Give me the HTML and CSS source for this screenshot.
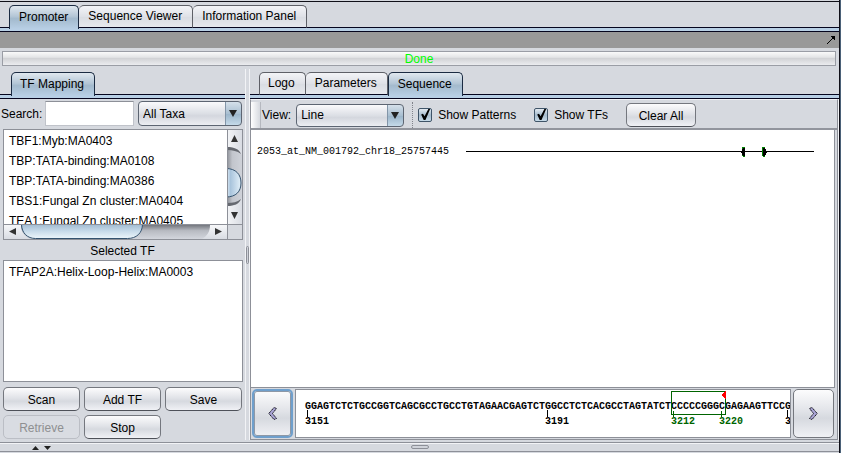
FILE: index.html
```html
<!DOCTYPE html>
<html lang="en">
<head>
<meta charset="utf-8">
<title>Promoter</title>
<link rel="stylesheet" href="styles.css">
</head>
<body>
<div class="app">
  <div class="tabs tabs-main" role="tablist">
    <button class="tab active" role="tab" aria-selected="true">Promoter</button>
    <button class="tab" role="tab">Sequence Viewer</button>
    <button class="tab" role="tab">Information Panel</button>
  </div>
  <div class="titlebar">
    <button class="detach" aria-label="Detach">
      <svg width="8" height="8" viewBox="0 0 8 8" shape-rendering="crispEdges"><path d="M4 0h4v4h-1v-1h-1v-1h-1v-1h-1z"/><path d="M0 7h1v-1h1v-1h1v-1h1v-1h1v-1h1v1h-1v1h-1v1h-1v1h-1v1h-1v1h-1z"/></svg>
    </button>
  </div>
  <div class="progress" role="progressbar" aria-label="Progress">Done</div>

  <div class="split">
    <section class="left">
      <div class="tabs tabs-sub" role="tablist">
        <button class="tab active" role="tab" aria-selected="true">TF Mapping</button>
      </div>
      <div class="search">
        <label for="q">Search:</label>
        <input id="q" class="field" type="text">
        <span class="combo">
          <select aria-label="Taxa"><option>All Taxa</option></select>
        </span>
      </div>
      <div class="scroller">
        <ul class="list">
          <li>TBF1:Myb:MA0403</li>
          <li>TBP:TATA-binding:MA0108</li>
          <li>TBP:TATA-binding:MA0386</li>
          <li>TBS1:Fungal Zn cluster:MA0404</li>
          <li>TEA1:Fungal Zn cluster:MA0405</li>
        </ul>
        <svg class="vbar" width="15" height="94" viewBox="0 0 15 94">
          <defs>
            <linearGradient id="tv"><stop offset="0" stop-color="#8d9097"/><stop offset=".35" stop-color="#c2c5cc"/><stop offset="1" stop-color="#cfd2d9"/></linearGradient>
            <linearGradient id="bv"><stop offset="0" stop-color="#e9f3fa"/><stop offset=".3" stop-color="#a9c4dc"/><stop offset="1" stop-color="#e3f0f9"/></linearGradient>
            <linearGradient id="btv"><stop offset="0" stop-color="#f4f5f7"/><stop offset="1" stop-color="#d9dce3"/></linearGradient>
          </defs>
          <path d="M0 0h15v94h-15z" fill="url(#btv)"/>
          <path d="M0 17c9 0 12 3 15 8v43c-3 6-6 8-15 8z" fill="url(#tv)"/>
          <path d="M0 17c7 0 12 2 14 7c-4-3-8-4-14-4zM0 76c7 0 12-2 14-7c-4 3-8 4-14 4z" fill="#666970"/>
          <path d="M-1 38.500c10 0 15 6 15 14.500s-5 14-15 14z" fill="url(#bv)" stroke="#35536f"/>
          <path d="M4 12l3.500-7l3.500 7zM4 82l3.500 7l3.500-7z" fill="#333"/>
          <path d="M.5 0v94" stroke="#8d9098"/>
        </svg>
        <svg class="hbar" width="223" height="14" viewBox="0 0 223 14">
          <defs>
            <linearGradient id="th" x2="0" y2="1"><stop offset="0" stop-color="#74777e"/><stop offset=".4" stop-color="#b7bac1"/><stop offset="1" stop-color="#d3d6dd"/></linearGradient>
            <linearGradient id="bh" x2="0" y2="1"><stop offset="0" stop-color="#9fbad1"/><stop offset=".5" stop-color="#c8dbea"/><stop offset="1" stop-color="#edf6fb"/></linearGradient>
            <linearGradient id="bth" x2="0" y2="1"><stop offset="0" stop-color="#f6f7f9"/><stop offset="1" stop-color="#d9dce3"/></linearGradient>
          </defs>
          <path d="M0 0h223v14h-223z" fill="url(#bth)"/>
          <path d="M17 0h189c0 7-3 11-8 14h-172c-6-3-9-7-9-14z" fill="url(#th)"/>
          <path d="M17.500-1c0 9 6 14.500 14 14.500h92c9 0 15-5.500 15-14.500z" fill="url(#bh)" stroke="#35536f"/>
          <path d="M12 3l-7 3.500l7 3.500zM211 3l7 3.500l-7 3.500z" fill="#333"/>
        </svg>
        <span class="corner"></span>
      </div>
      <h2 class="caption">Selected TF</h2>
      <ul class="list selected">
        <li>TFAP2A:Helix-Loop-Helix:MA0003</li>
      </ul>
      <div class="actions">
        <button class="btn">Scan</button>
        <button class="btn">Add TF</button>
        <button class="btn">Save</button>
        <button class="btn" disabled>Retrieve</button>
        <button class="btn">Stop</button>
      </div>
    </section>

    <div class="divider"><span class="grip"></span></div>

    <section class="right">
      <div class="tabs tabs-sub" role="tablist">
        <button class="tab" role="tab">Logo</button>
        <button class="tab" role="tab">Parameters</button>
        <button class="tab active" role="tab" aria-selected="true">Sequence</button>
      </div>
      <div class="panel">
        <div class="toolbar">
          <span class="handle"></span>
          <label for="view">View:</label>
          <span class="combo view">
            <select id="view"><option>Line</option></select>
          </span>
          <span class="dots"></span>
          <label class="check"><input type="checkbox" checked>Show Patterns</label>
          <label class="check"><input type="checkbox" checked>Show TFs</label>
          <button class="btn clear">Clear All</button>
        </div>
        <div class="canvas">
          <div class="track">
            <span class="name">2053_at_NM_001792_chr18_25757445</span>
            <span class="line">
              <svg width="28" height="10" viewBox="0 0 28 10" shape-rendering="crispEdges">
                <path d="M3 0h3v10h-2v-1h-1z" fill="#008000"/><path d="M6 1v8h-2v-1h-1v-2h-1v-2h1v-2h1v-1z"/>
                <path d="M23 0h3v10h-2v-1h-1z" fill="#008000"/><path d="M24 1h2v1h1v2h1v2h-1v2h-1v1h-2z"/>
              </svg>
            </span>
          </div>
        </div>
        <div class="strip">
          <button class="nav focus" aria-label="Previous">
            <svg width="9" height="13" viewBox="0 0 9 13"><path d="M6 .5L.8 6.500L6 12.500L8.500 11.500L4.500 6.500L8.500 1.500z" fill="#a9a4d4" stroke="#15151f" stroke-dasharray="1.500 .5"/></svg>
          </button>
          <div class="ruler">
            <svg width="520" height="46" viewBox="0 0 520 46" shape-rendering="crispEdges">
              <text x="9" y="19">GGAGTCTCTGCCGGTCAGCGCCTGCCTGTAGAACGAGTCTGGCCTCTCACGCCTAGTATCTCCCCCGGGCGAGAAGTTCCG</text>
              <path d="M11.500 20v7M251.500 20v7M491.500 20v7" stroke="#000"/>
              <path d="M377.500 21v6M425.500 21v6" stroke="#006400"/>
              <path d="M375.500 1.500h54v23h-54z" fill="none" stroke="#006400"/>
              <path d="M430 1v8h-1l-4-4l4-4z" fill="#f00"/>
              <text x="9" y="34">3151</text>
              <text x="249" y="34">3191</text>
              <text x="375" y="34" class="hit">3212</text>
              <text x="423" y="34" class="hit">3220</text>
              <text x="489" y="34">3231</text>
            </svg>
          </div>
          <button class="nav" aria-label="Next">
            <svg width="9" height="13" viewBox="0 0 9 13"><path d="M3 .5L8.200 6.500L3 12.500L.5 11.500L4.500 6.500L.5 1.500z" fill="#a9a4d4" stroke="#15151f" stroke-dasharray="1.500 .5"/></svg>
          </button>
        </div>
      </div>
    </section>
  </div>

  <div class="bottom">
    <svg width="20" height="5" viewBox="0 0 20 5"><path d="M0 5l3.500-4l3.500 4zM12 1h7l-3.500 4z" fill="#222"/></svg>
    <span class="grip"></span>
  </div>
</div>
</body>
</html>
```
FILE: styles.css
```css
* { box-sizing: border-box; }

body {
  margin: 0;
  background: #d6d9df;
  color: #000;
  font: 12px/16px "Liberation Sans", Arial, sans-serif;
}

button, input, select { font: inherit; color: inherit; margin: 0; }

.app {
  display: flex;
  flex-direction: column;
  min-height: 100vh;
  border-right: 1px solid #4b6178;
  box-shadow: inset -1px 0 #101018;
  padding-right: 1px;
}

/* Tabs */
.tabs {
  display: flex;
  align-items: flex-end;
  height: 30px;
  border-bottom: 1px solid #05051e;
  background: linear-gradient(#05051e, #05051e) 0 calc(100% - 3px) / 100% 1px no-repeat,
    linear-gradient(#b8cfe5, #b8cfe5) 0 100% / 100% 3px no-repeat;
}
.tabs-main {
  height: 31px;
  margin-top: 1px;
  padding-left: 9px;
  border-top: 1px solid #101018;
}
.tabs-sub { padding-left: 9px; }
.left .tabs-sub { padding-left: 11px; }
.tab {
  height: 23px;
  margin-bottom: 3px;
  padding: 0 10px 1px 9px;
  border: 1px solid #5e6067;
  border-bottom-color: #05051e;
  border-left-width: 0;
  border-radius: 5px 5px 0 0;
  background: linear-gradient(#f3f4f7, #dfe1e7 50%, #d9dce2 51%, #e6e8ed);
  white-space: nowrap;
}
.tab:first-child {
  padding-left: 8px;
  border-left-width: 1px;
}
.tab.active {
  height: 24px;
  margin-bottom: 2px;
  padding-bottom: 2px;
  border-color: #1b2b42;
  border-bottom: 0;
  border-left-width: 1px;
  background: linear-gradient(#e0e8ef, #b4c6d6 45%, #a3bacd 55%, #b8cfe5);
}
.tabs-main .tab:first-child { padding-left: 9px; }

.titlebar {
  display: flex;
  justify-content: flex-end;
  align-items: center;
  height: 16px;
  padding-right: 4px;
  background: #999;
}
.detach {
  display: flex;
  padding: 0;
  border: 0;
  background: none;
}

.progress {
  height: 15px;
  margin: 3px 3px 3px 2px;
  border: 1px solid #9a9da5;
  background: linear-gradient(#fafafa, #e4e5e7 40%, #d2d3d6 50%, #ebecef);
  color: #0f0;
  line-height: 14px;
  text-align: center;
}

/* Split layout */
.split { display: flex; flex: 1; }
.left {
  display: flex;
  flex-direction: column;
  width: 245px;
}
.divider {
  display: flex;
  align-items: center;
  width: 5px;
  border: solid #f2f3f6;
  border-width: 0 1px;
}
.grip {
  width: 4px;
  height: 18px;
  border: 1px solid #8d9098;
  border-radius: 2px;
  background: #d0d3da;
}
.right {
  display: flex;
  flex: 1;
  flex-direction: column;
  min-width: 0;
}

.search {
  display: flex;
  align-items: center;
  gap: 3px;
  padding: 2px 3px 0 1px;
}
.field {
  flex: 1;
  width: 0;
  height: 25px;
  padding: 0 6px;
  border: 1px solid #c0c3ca;
  border-top-color: #8d9098;
  background: #fff;
}

.combo {
  position: relative;
  display: flex;
  width: 104px;
  margin-left: 1px;
}
.combo select {
  width: 100%;
  height: 25px;
  padding: 0 20px 0 4px;
  border: 1px solid #5d6572;
  border-radius: 4px;
  appearance: none;
  background: linear-gradient(90deg, transparent calc(100% - 16px), #8295a8 calc(100% - 16px), #8295a8 calc(100% - 15px), transparent calc(100% - 15px)),
    linear-gradient(#d5e0ea, #a9bfd1 50%, #9ab4c9 51%, #c5dae9) 100% 0 / 15px 100% no-repeat,
    linear-gradient(#fafafc, #dcdfe5 50%, #d4d7de 60%, #eceef2);
}
.combo::after {
  content: "";
  position: absolute;
  top: 9px;
  right: 5px;
  border: solid transparent;
  border-width: 7px 4px 0;
  border-top-color: #222;
  pointer-events: none;
}

.scroller {
  display: grid;
  grid-template: 94px 15px / 1fr 15px;
  margin: 3px 2px 0 3px;
  border: 1px solid #8d9098;
}
.list {
  margin: 0;
  padding: 1px 5px;
  background: #fff;
  list-style: none;
  line-height: 20px;
  white-space: nowrap;
  overflow: hidden;
}
.vbar { display: block; }
.hbar, .corner { border-top: 1px solid #8d9098; }
.hbar { display: block; width: 100%; height: 15px; }
.corner { border-left: 1px solid #8d9098; }

.caption {
  margin: 0;
  font: inherit;
  line-height: 20px;
  padding-top: 1px;
  margin-bottom: -1px;
  text-align: center;
}
.selected {
  flex: 1;
  margin: 0 2px 0 3px;
  border: 1px solid #8d9098;
}

.actions {
  display: grid;
  grid-template-columns: repeat(3, 1fr);
  gap: 4px;
  padding: 5px 3px 1px;
}
.btn {
  height: 24px;
  padding: 1px 0 0;
  border: 1px solid #74777e;
  border-bottom-color: #4e5159;
  border-radius: 5px;
  background: linear-gradient(#fcfcfd, #e1e3e8 45%, #d6d9df 60%, #f0f1f5);
}
.btn:disabled {
  border-color: #bbbec5;
  background: #d9dce2;
  color: #8e8f91;
}

/* Sequence panel */
.panel {
  display: flex;
  flex: 1;
  flex-direction: column;
  margin-right: 1px;
  border: 1px solid #8d9098;
  border-top-color: #f2f3f6;
  box-shadow: 1px 0 #f2f3f6;
}
.toolbar {
  display: flex;
  align-items: center;
  height: 30px;
  padding-top: 2px;
  border-bottom: 2px solid #92959d;
}
.handle {
  align-self: stretch;
  width: 10px;
  margin-right: 1px;
  border-right: 1px solid #b5b8bf;
  background: linear-gradient(90deg, #fff, #d6d9df);
}
.combo.view { width: 108px; margin-left: 5px; }
.combo.view select { height: 23px; }
.combo.view::after { top: 8px; }
.dots {
  height: 26px;
  margin: 0 5px 0 8px;
  border-left: 1px dotted #80838b;
}
.check {
  display: flex;
  align-items: center;
  gap: 6px;
  margin-right: 18px;
}
.check input {
  position: relative;
  width: 14px;
  height: 14px;
  border: 1px solid #3f5468;
  border-radius: 2px;
  appearance: none;
  background: linear-gradient(#e3eaf1, #a5bbcd 50%, #c6dae8);
}
.check input:checked::after {
  content: "";
  position: absolute;
  inset: 0 1px 1px 2px;
  background: #000;
  clip-path: polygon(0 50%, 20% 44%, 38% 66%, 80% 0, 100% 0, 48% 100%, 28% 100%);
}
.clear { width: 70px; }

.canvas {
  flex: 1;
  margin-right: 2px;
  padding: 13px 20px 0 6px;
  border-right: 1px solid #8d9098;
  border-bottom: 1px solid #8d9098;
  background: #fff;
}
.track {
  display: flex;
  align-items: center;
  gap: 17px;
}
.name {
  font: 10px/18px "Liberation Mono", "Courier New", monospace;
}
.line {
  display: flex;
  justify-content: flex-end;
  flex: 1;
  padding-right: 47px;
  background: linear-gradient(#000, #000) 0 4px / 100% 1px no-repeat;
}
.line svg { display: block; }

.strip {
  display: flex;
  gap: 2px;
  height: 51px;
  padding: 1px 3px 1px 1px;
}
.nav {
  display: flex;
  align-items: center;
  justify-content: center;
  width: 41px;
  padding: 0;
  border: 1px solid #74777e;
  border-radius: 5px;
  background: linear-gradient(#fcfcfd, #e1e3e8 45%, #d6d9df 60%, #f0f1f5);
}
.nav.focus {
  border: 2px solid #6f9fcc;
  box-shadow: inset 0 0 0 1px #8e98a6;
}
.ruler {
  flex: 1;
  min-width: 0;
  border: 1px solid #8d9098;
  background: #fff;
  overflow: hidden;
}
.ruler svg { display: block; }
.ruler text {
  font: bold 10px "Liberation Mono", "Courier New", monospace;
}
.ruler .hit { fill: #006400; }

.bottom {
  display: flex;
  align-items: center;
  height: 10px;
  margin: 2px 0 1px;
  padding: 0 52px 0 32px;
  border: solid #8d9098;
  border-width: 1px 0;
  box-shadow: inset 0 1px #f2f3f6;
}
.bottom svg { flex: none; }
.bottom .grip {
  width: 18px;
  height: 4px;
  margin: 0 auto;
}
```
